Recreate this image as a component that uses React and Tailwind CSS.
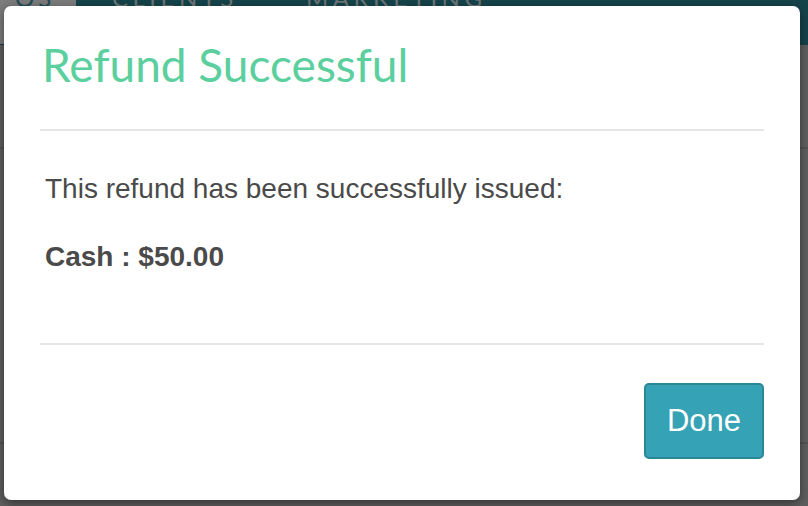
import React from "react";

const lato = { fontFamily: '"Lato", "Open Sans", sans-serif' };
const sans = { fontFamily: '"Liberation Sans", Arial, sans-serif' };

function TopNav() {
  return (
    <div className="flex h-[45px] border-b border-[#163f45] bg-[#15434a]" style={lato}>
      <div className="flex w-[76px] items-start bg-[#7b7b7b] pl-[15px]">
        <span className="-mt-[14px] text-[24px] leading-none tracking-[4px] text-[#1f4d54]">OS</span>
      </div>
      <div className="flex items-start gap-[68px] pl-[36px]">
        <span className="-mt-[14px] text-[24px] leading-none tracking-[4.5px] text-[#6d7475]">CLIENTS</span>
        <span className="-mt-[14px] text-[24px] leading-none tracking-[4.5px] text-[#6d7475]">MARKETING</span>
      </div>
    </div>
  );
}

function Backdrop() {
  return (
    <div className="flex flex-1 flex-col bg-[#5e5e5e]">
      <div className="h-[102px]" />
      <div className="h-[2px] bg-[#525252]" />
      <div className="h-[293px]" />
      <div className="h-[2px] bg-[#525252]" />
    </div>
  );
}

function RefundModal() {
  return (
    <div className="absolute left-[4px] top-[6px] flex h-[494px] w-[796px] flex-col rounded-[7px] bg-white px-[36px] shadow-[0_3px_10px_rgba(0,0,0,0.45)]">
      <h1 className="mt-[36px] pl-[2px] text-[46px] font-normal leading-none text-[#5ccf9e]" style={lato}>
        Refund Successful
      </h1>
      <div className="mt-[41px] h-[2px] bg-[#e6e6e6]" />
      <div className="pl-[5px] text-[#4a4a4a]" style={sans}>
        <p className="mt-[44px] text-[28px] leading-none">This refund has been successfully issued:</p>
        <p className="mt-[40px] text-[28px] font-bold leading-none">Cash : $50.00</p>
      </div>
      <div className="mt-[72px] h-[2px] bg-[#e6e6e6]" />
      <div className="mt-[38px] flex justify-end">
        <button
          className="flex h-[76px] w-[120px] items-center justify-center rounded-[5px] border-2 border-[#2a8797] bg-[#35a2b5] text-[31px] text-white"
          style={sans}
        >
          Done
        </button>
      </div>
    </div>
  );
}

export default function App() {
  return (
    <div className="relative flex h-[506px] w-[808px] flex-col overflow-hidden bg-[#5e5e5e]">
      <TopNav />
      <Backdrop />
      <RefundModal />
    </div>
  );
}
